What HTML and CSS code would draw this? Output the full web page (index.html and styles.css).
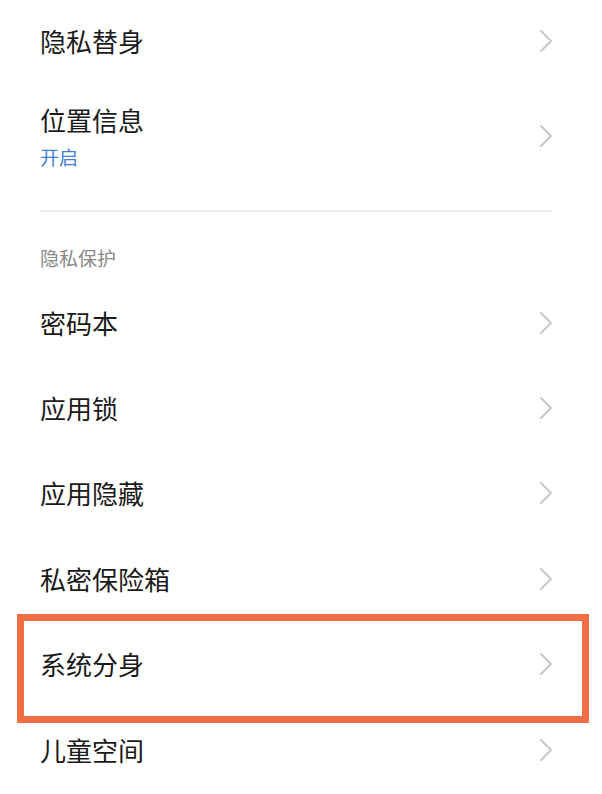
FILE: index.html
```html
<!DOCTYPE html>
<html lang="zh-CN">
<head>
    <meta charset="UTF-8">
    <meta name="viewport" content="width=device-width, initial-scale=1.0">
    <title>隐私</title>
    <link rel="stylesheet" href="styles.css">
</head>
<body>

    <div class="settings">
        <div class="row first">
            <div class="label">隐私替身</div>
            <svg class="arrow" viewBox="0 0 14 24"><polyline points="2,2 12,12 2,22"/></svg>
        </div>

        <div class="row tall">
            <div class="label-group">
                <div class="label">位置信息</div>
                <div class="status">开启</div>
            </div>
            <svg class="arrow" viewBox="0 0 14 24"><polyline points="2,2 12,12 2,22"/></svg>
        </div>

        <div class="divider"></div>

        <div class="section-title">隐私保护</div>

        <div class="row">
            <div class="label">密码本</div>
            <svg class="arrow" viewBox="0 0 14 24"><polyline points="2,2 12,12 2,22"/></svg>
        </div>
        <div class="row">
            <div class="label">应用锁</div>
            <svg class="arrow" viewBox="0 0 14 24"><polyline points="2,2 12,12 2,22"/></svg>
        </div>
        <div class="row">
            <div class="label">应用隐藏</div>
            <svg class="arrow" viewBox="0 0 14 24"><polyline points="2,2 12,12 2,22"/></svg>
        </div>
        <div class="row">
            <div class="label">私密保险箱</div>
            <svg class="arrow" viewBox="0 0 14 24"><polyline points="2,2 12,12 2,22"/></svg>
        </div>
        <div class="row highlighted">
            <div class="label">系统分身</div>
            <svg class="arrow" viewBox="0 0 14 24"><polyline points="2,2 12,12 2,22"/></svg>
        </div>
        <div class="row">
            <div class="label">儿童空间</div>
            <svg class="arrow" viewBox="0 0 14 24"><polyline points="2,2 12,12 2,22"/></svg>
        </div>
    </div>

</body>
</html>
```

FILE: styles.css
```css
body {
    margin: 0;
    background-color: #ffffff;
    font-family: "Noto Sans CJK SC", "Noto Sans", sans-serif;
    overflow: hidden;
}
.settings {
    display: flex;
    flex-direction: column;
    padding: 0 50px 0 40px;
}
.row {
    position: relative;
    display: flex;
    align-items: center;
    justify-content: space-between;
    height: 85.4px;
}
.row.first {
    height: 81px;
}
.row.tall {
    height: auto;
    padding: 21px 0;
}
.label {
    font-size: 26px;
    line-height: 36px;
    color: #1a1a1a;
}
.label-group {
    display: flex;
    flex-direction: column;
}
.status {
    margin-top: 7px;
    font-size: 19px;
    line-height: 24px;
    color: #3f7fd6;
}
.arrow {
    width: 14px;
    height: 24px;
    margin-right: -1px;
    flex-shrink: 0;
}
.arrow polyline {
    fill: none;
    stroke: #c8c8c8;
    stroke-width: 2;
    stroke-linecap: round;
    stroke-linejoin: round;
}
.divider {
    margin-top: 20px;
    height: 2px;
    background-color: #f0f0f0;
}
.section-title {
    padding: 34px 0 10px;
    font-size: 19px;
    line-height: 24px;
    color: #8a8a8a;
}
.row.highlighted::after {
    content: "";
    position: absolute;
    top: -8px;
    bottom: -16px;
    left: -23px;
    right: -37px;
    border: 7px solid #f26f43;
    pointer-events: none;
}
```
